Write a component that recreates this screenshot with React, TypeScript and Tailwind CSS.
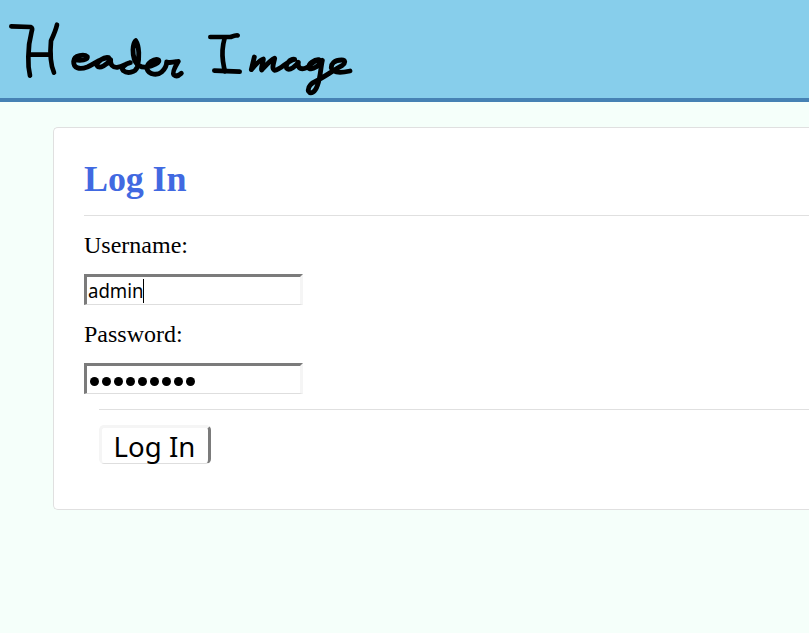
import React from "react";

function HeaderLettering() {
  return (
    <svg
      className="block h-[95px] w-[380px]"
      viewBox="0 0 1140 285"
      fill="none"
      stroke="#000"
      strokeWidth="14"
      strokeLinecap="round"
      strokeLinejoin="round"
      role="img"
      aria-label="Header Image"
    >
      <path d="M34 49 L92 51 Q99 53 95 64 Q85 102 85 140 Q84 172 90 197" />
      <path d="M88 134 L152 134" />
      <path d="M171 44 Q167 62 153 92 C150 125 150 160 162 188" />
      <g strokeWidth="14.5">
        <path d="M226 149 C242 153 264 149 262 140 C254 132 222 134 221 154 C220 176 240 179 262 171 C283 162 300 145 326 143 C312 139 290 156 291 167 C299 179 322 163 332 149 C330 164 338 173 352 172 C368 169 380 160 391 158 C375 161 362 174 370 182 C382 192 406 188 412 171 C419 145 418 108 407 92 C396 104 398 134 403 148 C408 165 424 174 440 171 C458 169 480 158 476 150 C464 143 439 160 441 177 C447 196 474 196 485 186 C497 175 500 164 500 156 C510 160 524 156 535 154 C528 166 516 187 521 194 C528 200 537 197 544 190" />
        <path d="M763 141 L754 179 C765 166 778 150 790 147 C791 156 782 171 785 180 C798 166 812 150 824 145 C822 158 813 176 824 181 C844 180 860 152 884 148 C870 146 855 164 860 175 C869 184 889 167 895 157 C892 176 905 180 920 173 C931 166 943 151 957 149 C945 147 922 162 927 175 C939 182 961 164 967 151 C962 171 962 200 953 224 C945 248 932 254 925 243 C923 229 937 218 953 211 C975 199 1002 180 1026 167 C1038 158 1036 150 1025 150 C1002 150 993 162 994 174 C998 189 1018 190 1050 183" />
      </g>
      <path d="M631 81 L692 81 Q710 74 713 76" />
      <path d="M674 84 Q664 120 669 154 Q672 174 675 184" />
      <path d="M643 182 L719 185" />
    </svg>
  );
}

function Field({ label, children }: { label: string; children: React.ReactNode }) {
  return (
    <div className="h-[89px]">
      <div className="h-[44px] pt-[1px] text-[24px] leading-[28px] text-black">{label}</div>
      <div className="flex h-[31px] w-[219px] items-center border-t-[3px] border-r-[3px] border-b border-l-[3px] border-t-[#7b7b7b] border-r-[#f5f5f5] border-b-[#dedede] border-l-[#7b7b7b] bg-white pl-[1px] font-['Noto_Sans','Liberation_Sans',sans-serif] text-[20px] leading-[26px] text-black">
        {children}
      </div>
    </div>
  );
}

export default function App() {
  return (
    <div className="h-[633px] w-full overflow-hidden bg-[#f5fffa] font-['Liberation_Serif',serif]">
      <header className="h-[102px] overflow-hidden border-b-4 border-[#4682b4] bg-[#87ceeb] pt-[10px]">
        <HeaderLettering />
      </header>
      <main className="mt-[25px] ml-[53px] h-[383px] rounded-l-[5px] border border-r-0 border-[#e0e0e0] bg-white pl-[30px]">
        <h1 className="h-[88px] border-b border-[#e0e0e0] pt-[30px] text-[36px] leading-[42px] font-bold tracking-[-0.1px] text-[#4169e1]">
          Log In
        </h1>
        <form className="pt-[14px]">
          <Field label="Username:">
            <span className="w-[55px]">
              <span className="inline-block origin-left scale-x-[0.93]">admin</span>
            </span>
            <span className="h-[24px] w-px bg-black" />
          </Field>
          <Field label="Password:">
            <span className="flex gap-[3px] pt-[4px] pl-[2px]">
              {Array.from({ length: 9 }, (_, i) => (
                <span key={i} className="size-[9px] rounded-full bg-black" />
              ))}
            </span>
          </Field>
          <div className="mt-px ml-[15px] border-t border-[#e0e0e0] pt-[15px]">
            <button
              type="button"
              className="flex h-[39px] w-[112px] items-center justify-center rounded-[5px] border-t-[3px] border-r-[3px] border-b border-l-[3px] border-t-[#f5f5f5] border-r-[#7b7b7b] border-b-[#dedede] border-l-[#f5f5f5] bg-white pr-px font-['Noto_Sans','Liberation_Sans',sans-serif] text-[28px] leading-[34px] text-black"
            >
              <span className="scale-x-[0.985]">Log In</span>
            </button>
          </div>
        </form>
      </main>
    </div>
  );
}
